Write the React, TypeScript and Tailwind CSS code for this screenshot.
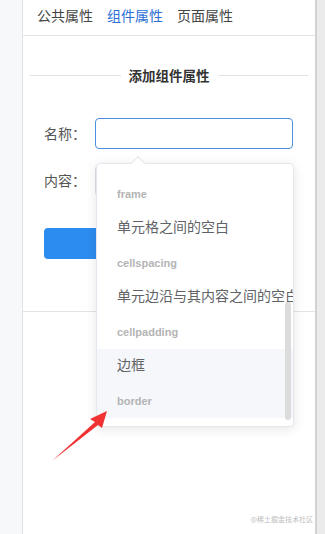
const font = { fontFamily: '"Noto Sans CJK SC", "Liberation Sans", sans-serif' }

const options = [
  { label: '', value: 'frame' },
  { label: '单元格之间的空白', value: 'cellspacing' },
  { label: '单元边沿与其内容之间的空白', value: 'cellpadding' },
  { label: '边框', value: 'border', hover: true },
]

function Dropdown() {
  return (
    <div className="absolute left-[73px] top-[163px] w-[198px] h-[264px] py-[6px] bg-white rounded border border-[#e4e7ed] shadow-[0_2px_12px_rgba(0,0,0,0.1)]">
      {/* popper arrow */}
      <div className="absolute -top-[6px] left-[36px] w-[10px] h-[10px] rotate-45 bg-white border-l border-t border-[#e4e7ed]" />
      <div className="relative h-full overflow-hidden">
        <div className="mt-[-28px]">
          {options.map((o) => (
            <div
              key={o.value}
              className={`h-[69px] pl-[20px] pt-[6px] whitespace-nowrap ${o.hover ? 'bg-[#f5f7fa]' : ''}`}
            >
              <div className="h-[18px] text-[14px] leading-[18px] text-[#606266]">{o.label}</div>
              <div
                className="mt-[21px] text-[11px] leading-[14px] font-bold text-[#b4b4b4]"
                style={{ fontFamily: '"Liberation Sans", sans-serif' }}
              >
                {o.value}
              </div>
            </div>
          ))}
        </div>
        {/* scrollbar */}
        <div className="absolute right-[2px] top-[132px] w-[6px] h-[118px] rounded-full bg-[#dcdcdc]" />
      </div>
    </div>
  )
}

export default function App() {
  return (
    <div className="relative flex w-[325px] h-[534px] bg-white" style={font}>
      <div className="w-[23px] shrink-0 bg-[#f7f8fa] border-r border-[#e2e2e2]" />

      <div className="relative w-[294px] shrink-0 border-r-2 border-[#d2d2d2]">
        <div className="flex h-[36px] pb-[4px] items-center gap-[14px] pl-[14px] border-b border-[#e4e4e4] text-[14px] text-[#444]">
          <span>公共属性</span>
          <span className="text-[#2b6fd6]">组件属性</span>
          <span>页面属性</span>
        </div>

        <div className="flex items-center gap-[8px] px-[7px] mt-[29px]">
          <div className="flex-1 h-px bg-[#e2e2e2]" />
          <span className="text-[13.5px] font-bold text-[#333]">添加组件属性</span>
          <div className="flex-1 h-px bg-[#e2e2e2]" />
        </div>

        <div className="pl-[21px] pr-[22px] mt-[33px] text-[14px] text-[#555]">
          <div className="flex items-center h-[31px]">
            <span className="w-[51px] shrink-0">名称：</span>
            <div className="flex-1 h-[31px] rounded-[4px] border border-[#4a8fdf]" />
          </div>
          <div className="flex items-center h-[31px] mt-[16px]">
            <span className="w-[51px] shrink-0">内容：</span>
            <div className="flex-1 h-[31px] rounded-[4px] border border-[#dcdfe6]" />
          </div>
          <div className="mt-[32px] h-[31px] w-[120px] rounded-[4px] bg-[#2d8cf0]" />
        </div>

        <div className="mt-[52px] h-px bg-[#e4e4e4]" />

        <Dropdown />

        <div className="absolute right-[2px] bottom-[10px] text-[7px] leading-[10px] text-[#c0c0c0]">@稀土掘金技术社区</div>
      </div>

      <div className="flex-1 bg-[#ebebeb]" />

      <svg className="absolute left-0 top-0 pointer-events-none" width="325" height="534">
        <polygon points="52,461 95,422 90,419 107,411 102,428 98,425" fill="#f03232" />
      </svg>
    </div>
  )
}
